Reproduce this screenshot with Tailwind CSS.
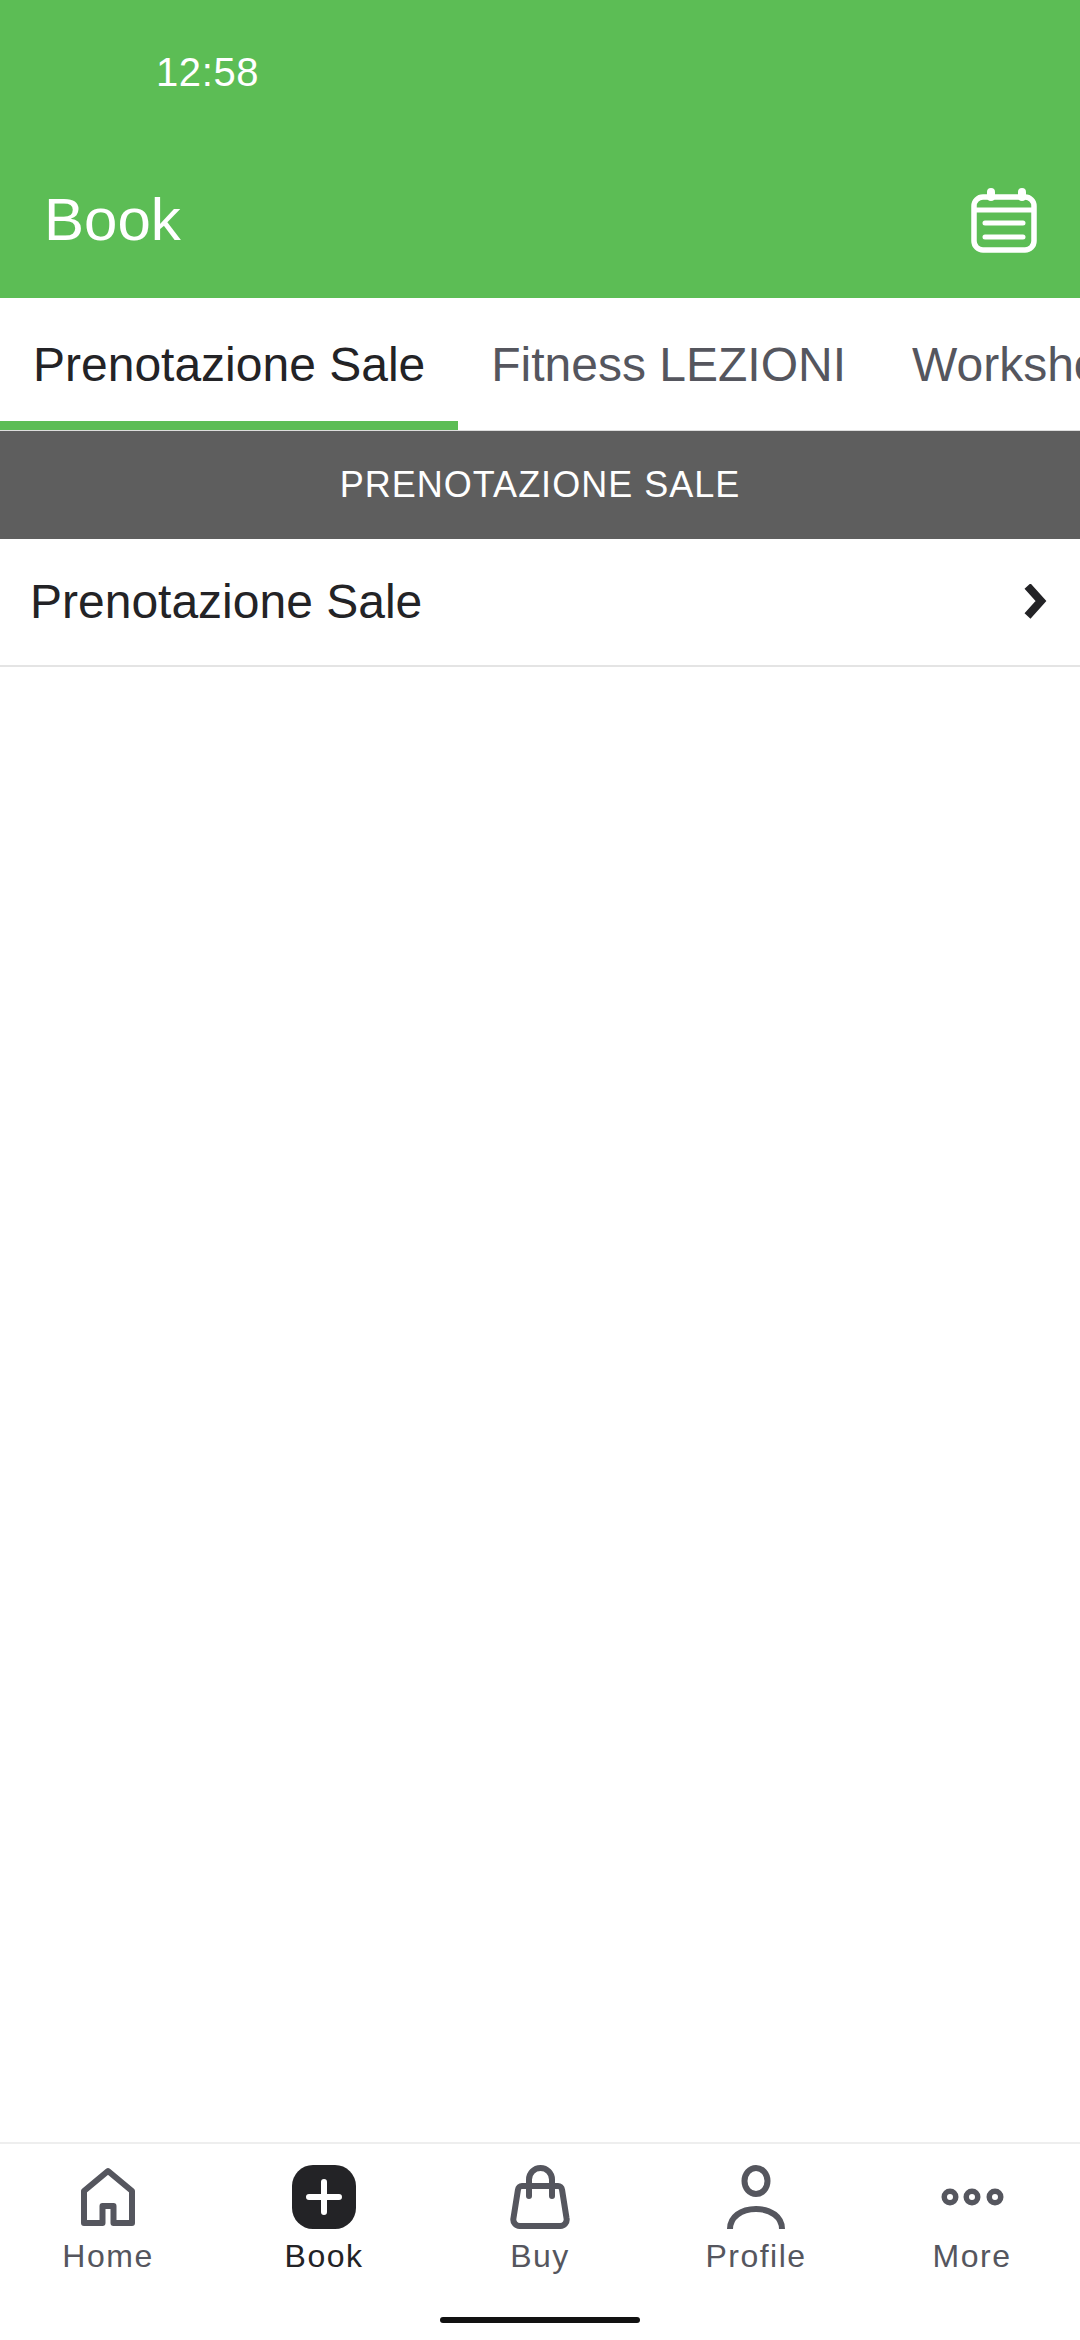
<!DOCTYPE html>
<html lang="it">
<head>
  <meta charset="UTF-8" />
  <meta name="viewport" content="width=device-width, initial-scale=1.0" />
  <title>Book</title>
  <script src="https://cdn.jsdelivr.net/npm/@tailwindcss/browser@4"></script>
</head>
<body class="bg-white font-['Liberation_Sans',sans-serif]">
  <div class="w-[1080px] h-[2340px] flex flex-col overflow-hidden">

    <!-- Header -->
    <header class="h-[298px] bg-[#5cbd55] text-white shrink-0">
      <div class="pt-[48px] pl-[156px] text-[40px] leading-[48px] tracking-[0.6px]">12:58</div>
      <div class="flex justify-between pl-[44px] pr-[37px] pt-[84px]">
        <h1 class="text-[60px] leading-[70px] mt-[5px]">Book</h1>
        <svg class="w-[80px] h-[80px]" viewBox="0 0 80 80" fill="none" stroke="white" stroke-width="5.500" stroke-linecap="round">
          <rect x="11" y="17" width="60" height="53" rx="9" />
          <path d="M11 30H71" stroke-linecap="butt" stroke-width="5" />
          <path d="M22 43H60M22 57H60" stroke-width="5" />
          <path d="M28 12V17M59 12V17" stroke-width="8" />
        </svg>
      </div>
    </header>

    <!-- Tabs -->
    <nav class="h-[133px] shrink-0 flex items-start overflow-hidden border-b border-[#dddddd] text-[48px] leading-[56px] text-[#55565e] whitespace-nowrap">
      <div class="relative h-[132px] px-[33px] pt-[39px] text-[#232326]">
        Prenotazione Sale
        <div class="absolute left-0 right-0 bottom-0 h-[9px] bg-[#5cbd55]"></div>
      </div>
      <div class="px-[33px] pt-[39px]">Fitness LEZIONI</div>
      <div class="px-[33px] pt-[39px]">Workshop</div>
    </nav>

    <!-- Sezione -->
    <div class="h-[108px] shrink-0 bg-[#5e5e5e] text-white text-[36px] tracking-[1px] flex items-center justify-center">PRENOTAZIONE SALE</div>

    <div class="h-[128px] shrink-0 flex items-center justify-between pl-[30px] pr-[32px] border-b-2 border-[#e4e4e4] text-[48px] text-[#232326]">
      <span>Prenotazione Sale</span>
      <svg class="w-[24px] h-[36px]" viewBox="0 0 24 36" fill="none" stroke="#232326" stroke-width="8">
        <path d="M3.500 2L17 17L3.500 32" />
      </svg>
    </div>

    <main class="flex-1"></main>

    <!-- Tab bar -->
    <footer class="h-[198px] shrink-0 border-t-2 border-[#eeeeee] pt-[21px] flex flex-col items-center">
      <div class="w-full grid grid-cols-5 text-[32px] leading-[40px] tracking-[1.5px] text-[#55565e]">
        <div class="flex flex-col items-center gap-[7px]">
          <svg class="w-[64px] h-[64px]" viewBox="0 0 64 64" fill="none" stroke="#55565e" stroke-width="6" stroke-linejoin="round">
            <path d="M8 58V26L32 6L56 26V58H37.5V41H26.5V58Z" />
          </svg>
          <span>Home</span>
        </div>
        <div class="flex flex-col items-center gap-[7px] text-[#232326]">
          <svg class="w-[64px] h-[64px]" viewBox="0 0 64 64" fill="none">
            <rect width="64" height="64" rx="21" fill="#232326" />
            <path d="M32 17V47M17 32H47" stroke="white" stroke-width="6" stroke-linecap="round" />
          </svg>
          <span>Book</span>
        </div>
        <div class="flex flex-col items-center gap-[7px]">
          <svg class="w-[64px] h-[64px]" viewBox="0 0 64 64" fill="none" stroke="#55565e" stroke-width="6" stroke-linecap="round">
            <path d="M14 21H50a4 4 0 0 1 4 3.5L58.5 53a6.5 6.5 0 0 1-6.5 8H12a6.5 6.5 0 0 1-6.5-8L10 24.5A4 4 0 0 1 14 21Z" />
            <path d="M21 31V14.500a11.500 11.500 0 0 1 23 0V31" />
          </svg>
          <span>Buy</span>
        </div>
        <div class="flex flex-col items-center gap-[7px]">
          <svg class="w-[64px] h-[64px]" viewBox="0 0 64 64" fill="none" stroke="#55565e" stroke-width="6">
            <ellipse cx="32" cy="16" rx="11.500" ry="13" />
            <path d="M6 64C6 52 17 44 32 44S58 52 58 64" />
          </svg>
          <span>Profile</span>
        </div>
        <div class="flex flex-col items-center gap-[7px]">
          <svg class="w-[64px] h-[64px]" viewBox="0 0 64 64" fill="none" stroke="#55565e" stroke-width="5.500">
            <circle cx="10" cy="32" r="5.750" />
            <circle cx="32" cy="32" r="5.750" />
            <circle cx="55" cy="32" r="5.750" />
          </svg>
          <span>More</span>
        </div>
      </div>
      <div class="w-[200px] h-[6px] mt-[41px] rounded-full bg-[#111111]"></div>
    </footer>
  </div>
</body>
</html>
